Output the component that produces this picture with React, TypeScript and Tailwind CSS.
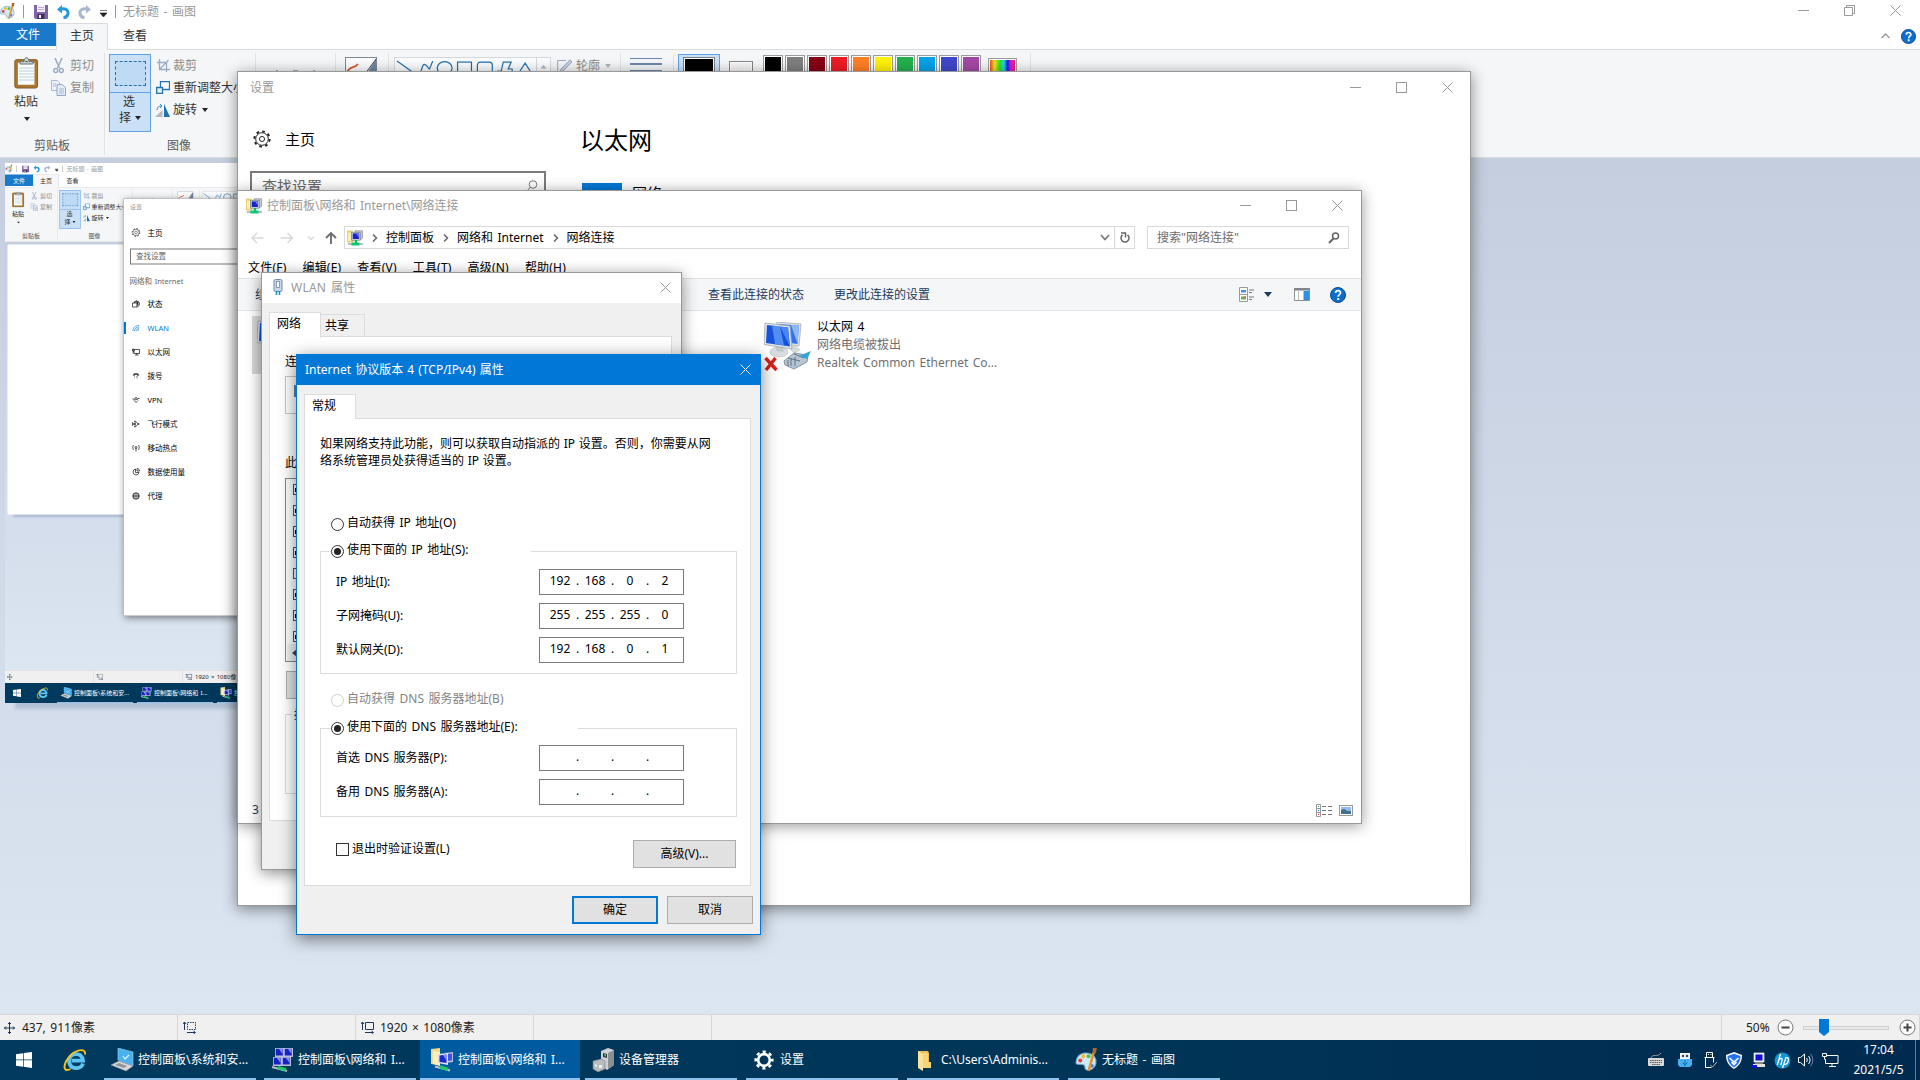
import React from 'react';

type Kids = { children?: React.ReactNode };

/* ---------- small glyphs ---------- */

const CloseGlyph = ({ color = '#999' }: { color?: string }) => (
  <svg width="11" height="11" viewBox="0 0 11 11" className="shrink-0">
    <path d="M.5 .5l10 10M10.5 .5l-10 10" stroke={color} strokeWidth="1" fill="none" />
  </svg>
);
const MinGlyph = () => (
  <svg width="11" height="11" viewBox="0 0 11 11" className="shrink-0">
    <path d="M0 5.500h11" stroke="#999" />
  </svg>
);
const MaxGlyph = () => (
  <svg width="11" height="11" viewBox="0 0 11 11" className="shrink-0">
    <rect x=".5" y=".5" width="10" height="10" stroke="#999" fill="none" />
  </svg>
);
const RestoreGlyph = () => (
  <svg width="11" height="11" viewBox="0 0 11 11" className="shrink-0">
    <path d="M.5 2.500h8v8h-8zM2.500 2.500v-2h8v8h-2" stroke="#999" fill="none" />
  </svg>
);
const Caret = ({ color = '#222', className = '' }: { color?: string; className?: string }) => (
  <svg width="6" height="4" viewBox="0 0 6 4" className={'shrink-0 ' + className}>
    <path d="M0 0h6L3 4z" fill={color} />
  </svg>
);
const HelpGlyph = ({ size = 16 }: { size?: number }) => (
  <svg width={size} height={size} viewBox="0 0 16 16" className="shrink-0">
    <circle cx="8" cy="8" r="7.500" fill="#0a6fd0" stroke="#0b4a86" />
    <path d="M5.600 6c.1-3 4.900-3 4.900-.2C10.500 7.700 8.200 7.600 8.200 9.800" stroke="#fff" strokeWidth="1.800" fill="none" />
    <rect x="7.200" y="11" width="2" height="2" fill="#fff" />
  </svg>
);

const PaletteIcon = ({ size = 16 }: { size?: number }) => (
  <svg width={size} height={size} viewBox="0 0 24 24" className="shrink-0">
    <path d="M2 13C3 6 9 4 14 5s8 5 7 10-6 7-9 6 0-4-3-5-8 1-7-3z" fill="#cfe9f8" stroke="#6fa9cc" />
    <circle cx="6" cy="12" r="2" fill="#e3443b" />
    <circle cx="9" cy="8" r="2" fill="#f3c02b" />
    <circle cx="14" cy="8" r="1.900" fill="#5fb946" />
    <circle cx="17" cy="17" r="2" fill="#3c8fdc" />
    <path d="M19 4l-5 18" stroke="#e8902c" strokeWidth="2.400" />
    <path d="M18 0h4l-1 5h-3z" fill="#a8692e" />
  </svg>
);
const SaveIcon = () => (
  <svg width="14" height="14" viewBox="0 0 14 14" className="shrink-0">
    <path d="M0 0h14v14H1.500L0 12.500z" fill="#8264ab" />
    <rect x="3" y="0" width="8" height="7" fill="#f4f2f8" />
    <path d="M4 2.500h6M4 4.500h6" stroke="#b9aed0" />
    <rect x="3.500" y="9" width="7" height="5" fill="#3f3158" />
    <rect x="5" y="10" width="2" height="3" fill="#fff" />
  </svg>
);
const UndoIcon = ({ flip = false }: { flip?: boolean }) => (
  <svg width="13" height="14" viewBox="0 0 13 14" className={flip ? 'shrink-0 -scale-x-100' : 'shrink-0'}>
    <path d="M2.500 4.500C8 2.500 11.500 5 11 8.500 10.700 11 9 12.500 6.500 13" stroke={flip ? '#a9b8cf' : '#2a97dd'} strokeWidth="3" fill="none" />
    <path d="M0 4.500L5 0v8.500z" fill={flip ? '#a9b8cf' : '#2a97dd'} />
  </svg>
);
const ClipboardIcon = () => (
  <svg width="25" height="32" viewBox="0 0 25 32" className="shrink-0">
    <rect x="2.200" y="4" width="20" height="25.500" rx="1" fill="#fbfdfe" stroke="#a9762f" strokeWidth="3.400" />
    <rect x=".8" y="2.600" width="22.800" height="28.400" rx="2" fill="none" stroke="#7d5526" strokeWidth=".7" />
    <path d="M5 11h15M5 14h15M5 17h15M5 20h15M5 23h15" stroke="#b9cfdf" />
    <path d="M6 7V4.500h4c0-5 5-5 5 0h4V7z" fill="#c9ced2" stroke="#6c7276" />
    <path d="M11.500 4.500h2" stroke="#444" />
  </svg>
);
const ScissorsIcon = () => (
  <svg width="11" height="16" viewBox="0 0 11 16" className="shrink-0">
    <path d="M2 0l4.500 10M9 0L4.500 10" stroke="#9babc7" strokeWidth="1.500" fill="none" />
    <circle cx="2.700" cy="12.500" r="2" stroke="#9babc7" strokeWidth="1.400" fill="none" />
    <circle cx="8.300" cy="12.500" r="2" stroke="#9babc7" strokeWidth="1.400" fill="none" />
  </svg>
);
const CopyIcon = () => (
  <svg width="15" height="16" viewBox="0 0 15 16" className="shrink-0">
    <path d="M.5 .5h6l2 2v8h-8z" fill="#eef2f8" stroke="#a9b8d3" />
    <path d="M6 4.500h5l3.500 3v8H6z" fill="#e5ecf7" stroke="#93a7c9" />
    <path d="M8 9h5M8 11h5M8 13h5M2 4h3M2 6h3" stroke="#a9b8d3" />
  </svg>
);

const NetFolderIcon = ({ size = 16 }: { size?: number }) => (
  <svg width={size} height={size} viewBox="0 0 16 16" className="shrink-0">
    <path d="M0 1h5l1 1v10H0z" fill="#f3dc7d" stroke="#d0b24a" strokeWidth=".6" />
    <path d="M1 3h4v8H1z" fill="#fbf0b0" />
    <path d="M8 .8h7.600v7.500L13 10V2.500H8z" fill="#c2c6d0" stroke="#8c8f99" strokeWidth=".7" />
    <rect x="4.600" y="2.300" width="8.400" height="7.900" fill="#d8dbe3" stroke="#7f8390" strokeWidth=".8" />
    <rect x="5.700" y="3.400" width="6.200" height="5.600" fill="#1725cf" />
    <path d="M9.500 4h2v3z" fill="#8ba2ff" />
    <path d="M9 10v3" stroke="#10b764" strokeWidth="2.400" />
    <path d="M1 14h15" stroke="#b7bcc0" strokeWidth="2" />
    <rect x="4.500" y="12.500" width="8" height="3" fill="#0fc873" />
  </svg>
);

const GearGlyph = ({ size, color, width }: { size: number; color: string; width: number }) => (
  <svg width={size} height={size} viewBox="0 0 24 24" className="shrink-0" fill="none" stroke={color}>
    <circle cx="12" cy="12" r="8.400" strokeWidth={width} />
    <circle cx="12" cy="12" r="10.200" strokeWidth="2.600" strokeDasharray="3.600 4.410" />
    <circle cx="12" cy="12" r="3.400" strokeWidth={width} />
  </svg>
);
const TaskGear = () => (
  <svg width="20" height="20" viewBox="0 0 24 24" className="shrink-0" fill="none" stroke="#fff">
    <circle cx="12" cy="12" r="7" strokeWidth="3.200" />
    <circle cx="12" cy="12" r="10" strokeWidth="3" strokeDasharray="3.850 4" strokeDashoffset="1.900" />
  </svg>
);

/* ---------- Paint ribbon ---------- */

const GroupLabel = ({ children }: Kids) => (
  <div className="mt-auto mb-[3px] h-4 text-center leading-4 text-[#5a5a5a]">{children}</div>
);
const Sep = () => <div className="mt-[3px] h-[102px] w-px shrink-0 bg-[#e2e3e4]" />;

const swatches = [
  'bg-black', 'bg-[#7f7f7f]', 'bg-[#880015]', 'bg-[#ed1c24]', 'bg-[#ff7f27]',
  'bg-[#fff200]', 'bg-[#22b14c]', 'bg-[#00a2e8]', 'bg-[#3f48cc]', 'bg-[#a349a4]',
];

const Ribbon = () => (
  <div className="flex h-[109px] shrink-0 border-y border-[#dadbdc] bg-[#f4f6f7]">
    <div className="flex w-[104px] flex-col">
      <div className="flex h-[86px]">
        <div className="ml-[13px] flex w-[26px] flex-col items-center pt-[7px]">
          <ClipboardIcon />
          <span className="mt-[5px] h-4 leading-4">粘贴</span>
          <Caret className="mt-[7px] ml-[2px]" />
        </div>
        <div className="ml-[12px] flex flex-col gap-[6px] pt-[8px] text-[#8d8d8d]">
          <div className="flex h-4 items-center"><span className="mr-[5px] ml-[2px] flex w-[12px]"><ScissorsIcon /></span>剪切</div>
          <div className="flex h-4 items-center"><span className="mr-[4px] flex w-[15px]"><CopyIcon /></span>复制</div>
        </div>
      </div>
      <GroupLabel>剪贴板</GroupLabel>
    </div>
    <Sep />
    <div className="flex w-[150px] flex-col">
      <div className="flex h-[83px]">
        <div className="mt-[4px] ml-[4px] flex h-[78px] w-[42px] shrink-0 flex-col items-center border border-[#62a2e4] bg-[#c9e0f7]">
          <div className="flex h-[38px] w-full items-center justify-center border-b border-[#62a2e4]">
            <div className="h-[25px] w-[31px] border border-dashed border-[#1f6fb5] bg-[#bfdaf4]" />
          </div>
          <span className="mt-px mr-[2px] h-4 leading-4">选</span>
          <span className="flex h-4 items-center leading-4">择<Caret className="ml-[4px]" /></span>
        </div>
        <div className="ml-[5px] flex flex-col gap-[6px] pt-[8px]">
          <div className="flex h-4 items-center text-[#8d8d8d]">
            <svg width="14" height="14" viewBox="0 0 14 14" className="mr-[3px] shrink-0"><path d="M3.500 0v10.500H14M1 3.500h9.500V13M12.500 1L4 10" stroke="#9babc7" strokeWidth="1.300" fill="none" /></svg>
            裁剪
          </div>
          <div className="flex h-4 items-center">
            <svg width="14" height="14" viewBox="0 0 14 14" className="mr-[3px] shrink-0"><path d="M4.500 .5h9v8h-9z" fill="#fff" stroke="#2372b4" strokeWidth="1.300" /><path d="M.7 6.500h5.800v5.800H.7z" fill="#e9f3fb" stroke="#2372b4" strokeWidth="1.300" /></svg>
            重新调整大小
          </div>
          <div className="flex h-4 items-center">
            <svg width="15" height="13" viewBox="0 0 15 13" className="mr-[3px] -ml-px shrink-0"><path d="M0 13L7.500 6v7z" fill="#b5b9bd" /><path d="M9 0l6 13H9z" fill="#1f70b5" /><path d="M2 6c0-3 2-4 4-4M5 0l2 2-2 2" stroke="#2b93dd" fill="none" /></svg>
            旋转<Caret className="ml-[5px]" />
          </div>
        </div>
      </div>
      <div className="mt-auto mb-[3px] pl-[62px] leading-4 text-[#5a5a5a]">图像</div>
    </div>
    <Sep />
    <div className="flex w-[79px] gap-[15px] pt-[20px] pl-[20px]">
      <i className="h-[2px] w-[2px] bg-[#9babc7]" /><i className="h-[2px] w-[5px] bg-[#9babc7]" /><i className="h-[2px] w-[2px] bg-[#9babc7]" />
    </div>
    <Sep />
    <div className="w-[52px] pt-[7px] pl-[9px]">
      <svg width="32" height="32" viewBox="0 0 32 32">
        <rect x=".5" y=".5" width="31" height="31" fill="#fbfcfd" stroke="#7f8890" />
        <path d="M2 15c4-7 7-3 11-8" stroke="#dd5b33" strokeWidth="2" fill="none" />
        <path d="M21 18L31 2v16z" fill="#6f86a3" /><path d="M20 17L31 2" stroke="#444" />
      </svg>
    </div>
    <Sep />
    <div className="flex w-[231px] pt-[7px] pl-[5px]">
      <div className="flex h-[60px] w-[157px] border border-[#d5d8dc] bg-[#fbfcfd]">
        <svg width="142" height="30" viewBox="0 0 142 30" className="shrink-0 border-r border-[#d5d8dc]" fill="none" stroke="#1f6faf" strokeWidth="1.200">
          <path d="M2 3l17 12M22 15c6 4 4-12 9-8s2 8 7-4" />
          <ellipse cx="50" cy="10" rx="7.500" ry="6.500" />
          <rect x="63" y="4" width="14" height="13" />
          <rect x="83" y="4" width="15" height="13" rx="3" />
          <path d="M103 13h4l2-9h8l-3 7h4v5M124 16l7-11 7 11z" />
        </svg>
        <svg width="13" height="20" viewBox="0 0 13 20"><path d="M3.500 10.500h6l-3-3.500z" fill="#aab3c2" /></svg>
      </div>
      <div className="mt-px ml-[6px] flex h-4 items-center text-[#8d8d8d]">
        <svg width="15" height="15" viewBox="0 0 15 15" className="mr-[4px]"><path d="M9 1.500H.7V14h8" stroke="#9babc7" fill="none" /><path d="M13 .8L4 10l-1 3 3-1L15 3z" fill="#c3cee0" stroke="#9babc7" /></svg>
        轮廓<Caret color="#b5b5b5" className="ml-[5px]" />
      </div>
    </div>
    <Sep />
    <div className="flex w-[52px] flex-col pt-[8px] pl-[9px]">
      <i className="h-px w-[32px] bg-[#6f86ab]" /><i className="mt-[4px] h-[2px] w-[32px] bg-[#6f86ab]" /><i className="mt-[5px] h-[3px] w-[32px] bg-[#6f86ab]" />
    </div>
    <Sep />
    <div className="flex w-[356px] pl-[4px]">
      <div className="mt-[4px] flex h-[78px] w-[42px] justify-center border border-[#62a2e4] bg-[#c9e0f7] pt-[2px]">
        <div className="h-[32px] w-[32px] border border-[#7a7f86] bg-white p-px"><div className="h-full w-full bg-black" /></div>
      </div>
      <div className="mt-[11px] ml-[9px] h-[24px] w-[24px] border border-[#868686] bg-white p-px"><div className="h-full w-full bg-[#f4f4f4]" /></div>
      <div className="mt-[5px] ml-[10px] flex gap-[2px]">
        {swatches.map((c) => (
          <div key={c} className="h-[20px] w-[20px] border border-[#9c9c9c] bg-white p-px"><div className={'h-full w-full ' + c} /></div>
        ))}
      </div>
      <div className="mt-[8px] ml-[7px] h-[28px] w-[29px] border border-[#9c9c9c] bg-white p-px">
        <div className="h-full w-full bg-[linear-gradient(90deg,#e84c1e,#f5e020_18%,#29e01e_40%,#18d9e8_56%,#1c1cf0_70%,#e31ce0_85%,#f01c50)]" />
      </div>
    </div>
    <Sep />
  </div>
);

/* ---------- taskbar ---------- */

const ControlPanelIcon = () => (
  <svg width="23" height="24" viewBox="0 0 23 24">
    <path d="M7 0l15 4v14L7 12z" fill="#49b1ee" stroke="#9fd3f3" strokeWidth=".6" />
    <path d="M12 8l2 3 4-4" stroke="#dff3ff" strokeWidth="1.200" fill="none" />
    <path d="M0 17l8-4 14 5-7 5z" fill="#d6d9dc" stroke="#8e949a" strokeWidth=".6" />
    <path d="M4 17l4-2 8 3-3 2z" fill="#8d959c" />
  </svg>
);
const ScreensIcon = () => (
  <svg width="24" height="24" viewBox="0 0 24 24">
    {[[5, 0], [14, 0], [3, 9], [12, 9]].map(([x, y]) => (
      <g key={`${x}-${y}`}>
        <path d={`M${x} ${y}h9v9h-9z`} fill="#b9bdd6" />
        <path d={`M${x + .8} ${y + .8}h7v6.700h-7z`} fill="#1822c4" />
        <path d={`M${x + 4} ${y + 1}h3.500v5z`} fill="#7f95f4" />
      </g>
    ))}
    <path d="M2 19l15 4" stroke="#b6bdc1" strokeWidth="2" />
    <path d="M8 19.500l8 2.300" stroke="#22c86a" strokeWidth="3" />
  </svg>
);
const FolderNetIcon = () => (
  <svg width="24" height="24" viewBox="0 0 24 24">
    <path d="M1 1l9-1v17l-9-1z" fill="#f3d98a" /><path d="M3 3l7 1v14l-7-2z" fill="#fdf0bd" />
    <path d="M15 5l8-1v10l-8 1z" fill="#b9bdd6" /><path d="M8 6l10-1v12l-10-2z" fill="#dfe2ea" /><path d="M9.500 7.500l7-1v8.500l-7-1z" fill="#1a28cc" />
    <path d="M13 7l3.500-.5v6z" fill="#8095f5" /><path d="M18 6l4-.6v7l-4 .4z" fill="#3c55dd" />
    <path d="M5 18.500l15 4" stroke="#bfc5c8" strokeWidth="2" /><path d="M10 19l8 2.300" stroke="#22c86a" strokeWidth="3.400" />
  </svg>
);
const DeviceIcon = () => (
  <svg width="23" height="24" viewBox="0 0 23 24">
    <path d="M9 3l7-3 6 2v15l-7 5-6-4z" fill="#cfd2d4" /><path d="M16 5l6-3v15l-6 4z" fill="#8b9094" />
    <path d="M11 5l4 1v4l-4-1z" fill="#2c3438" /><rect x="12.500" y="6" width="1.500" height="2.500" fill="#3be04f" />
    <path d="M1 13l8-2 4 2v8l-7 3-5-3z" fill="#b9bdc0" stroke="#777" strokeWidth=".6" /><path d="M3 16l2 1v2l-2-1zM7 17h3v3H7z" fill="#eceeef" />
  </svg>
);
const FolderIcon = () => (
  <svg width="16" height="21" viewBox="0 0 16 21">
    <path d="M1 1h10l1 2v9h2v6H1z" fill="#e9bd55" /><path d="M1 1l5 3v17l-5-3z" fill="#fbe39b" /><path d="M6 3h5v9h3v6H6z" fill="#f6d578" />
  </svg>
);
const IEIcon = () => (
  <svg width="24" height="24" viewBox="0 0 24 24" className="shrink-0">
    <path d="M20 15.500C18 22 7 22 6 13.500 5.500 5 19 2.500 20 12.700H8.500" stroke="#5cc6f4" strokeWidth="3.800" fill="none" />
    <path d="M22 6.500C23.500-1 11 1.500 4.500 11-.5 18.500 1 24.500 7.500 21" stroke="#f2c41d" strokeWidth="1.900" fill="none" />
  </svg>
);

const tasks = [
  { icon: <ControlPanelIcon />, text: '控制面板\\系统和安...' },
  { icon: <ScreensIcon />, text: '控制面板\\网络和 I...' },
  { icon: <FolderNetIcon />, text: '控制面板\\网络和 I...' },
  { icon: <DeviceIcon />, text: '设备管理器' },
  { icon: <TaskGear />, text: '设置' },
  { icon: <FolderIcon />, text: 'C:\\Users\\Adminis...' },
  { icon: <PaletteIcon size={25} />, text: '无标题 - 画图' },
];

const TrayIcons = () => (
  <div className="ml-auto flex items-center">
    <svg width="17" height="16" viewBox="0 0 17 16" className="mr-[13px]"><rect x="0" y="6" width="16" height="8" rx="1" fill="#dadada" /><path d="M2 8.500h12M2 10.500h12M4 12.500h8" stroke="#555" strokeDasharray="1.500 .7" /><path d="M3 6C5 1 9 6 13 1" stroke="#999" fill="none" /></svg>
    <svg width="14" height="17" viewBox="0 0 14 17" className="mr-[12px]"><rect x="2.500" y="1.500" width="9" height="5" fill="#d9edf9" stroke="#fff" /><path d="M4 4h2M8 4h2" stroke="#444" strokeWidth="2" /><path d="M0 7h14v6l-2 2H2l-2-2z" fill="#46b0ee" /><path d="M7 8v6M4.500 10.500l2.500 2.500 2.500-2.500" stroke="#126aa8" fill="none" /></svg>
    <svg width="14" height="17" viewBox="0 0 14 17" className="mr-[8px]" fill="none" stroke="#fff"><path d="M2.500 5V.5h6V5M.5 5.500h10M1.500 5.500v10h6M9.500 5.500v5" /><path d="M4 2.500h1M6.500 2.500h1" /><path d="M6.500 13l2 2 4.500-5" stroke="#bbb" /></svg>
    <svg width="16" height="17" viewBox="0 0 16 17" className="mr-[9px]"><path d="M0 3l8-3 8 3c0 7-3 11-8 14C3 14 0 10 0 3z" fill="#fff" /><path d="M1.500 4L8 1.700 14.500 4c0 5.500-2.500 9-6.500 11.500C4 13 1.500 9.500 1.500 4z" fill="#2474e8" /><path d="M3.500 6L8 10l4.500-4M5.500 10L8 12.500 10.500 10" stroke="#fff" strokeWidth="1.600" fill="none" /></svg>
    <svg width="15" height="17" viewBox="0 0 15 17" className="mr-[8px]"><rect x="3" y="1" width="10" height="9" fill="#e9e6df" stroke="#fff" strokeWidth=".6" /><rect x="4.500" y="2.500" width="7" height="6" fill="#1010d8" /><path d="M4 10h8v2H4z" fill="#888" /><path d="M2 12h12v3H2z" fill="#e4e2dc" /><path d="M0 13h6v3H0z" fill="#1010d8" /></svg>
    <svg width="17" height="17" viewBox="0 0 17 17" className="mr-[7px]"><circle cx="8.500" cy="8.500" r="8" fill="#1595d3" /><path d="M6.500 2L3.300 13M5 7.500c2.500-2 3.500-1 3 .8L6.800 13M12 5.500L8.500 16M11 6c3.500-1 4 .5 3 3.500s-2 3-4 2.700" stroke="#fff" strokeWidth="1.300" fill="none" /></svg>
    <svg width="16" height="16" viewBox="0 0 16 16" className="mr-[8px]" fill="none" stroke="#fff"><path d="M.5 5.500h2L6.500 2v12l-4-3.500h-2z" /><path d="M8.500 6c1 1.500 1 2.500 0 4M10.500 4c2 2.500 2 5.500 0 8" /><path d="M12.500 2c3 3.500 3 8.500 0 12" stroke="#7a8aa0" /></svg>
    <svg width="17" height="16" viewBox="0 0 17 16" className="mr-[14px]" fill="none" stroke="#fff"><path d="M5 3.500h11v8H3.500V7M7 14.500h7M10 11.500v3" /><path d="M.5 1.500h4v3h-4zM2.500 4.500v3" /></svg>
    <div className="flex w-[51px] flex-col items-center text-[12px] leading-5"><span>17:04</span><span>2021/5/5</span></div>
    <div className="ml-[11px] h-10 w-px bg-[#60788f]" />
    <div className="w-[4px]" />
  </div>
);

const Taskbar = ({ active }: { active: number }) => (
  <div className="flex h-10 shrink-0 items-center bg-[linear-gradient(90deg,#003a5e,#003557_60%,#002a4f)] text-white">
    <svg width="16" height="16" viewBox="0 0 16 16" className="ml-[16px] shrink-0"><path d="M0 2.200L7 1.200V7.600H0zM7.700 1.100L16 0v7.600H7.700zM0 8.300h7v6.400l-7-1zM7.700 8.300H16V16l-8.300-1.200z" fill="#fff" /></svg>
    <div className="mr-[13px] ml-[31px] flex"><IEIcon /></div>
    <div className="flex">
      {tasks.map((t, i) => (
        <div key={i} className={'flex h-10 flex-col ' + (i === active ? 'w-[160px] bg-[#005a9e]' : i >= 3 ? 'ml-px w-[160px] px-[4px]' : 'w-[160px] px-[4px]')}>
          <div className={'flex h-[38px] items-center pt-[2px] ' + (i === active ? 'pl-[10px]' : 'pl-[6px]')}>
            <span className="flex w-[24px] shrink-0 justify-center">{t.icon}</span>
            <span className="ml-[4px]">{t.text}</span>
          </div>
          <div className="h-[2px] bg-[#8fc3ee]" />
        </div>
      ))}
    </div>
    <TrayIcons />
  </div>
);

/* ---------- Paint window shell ---------- */

const SizeGlyph = ({ dashed = false }: { dashed?: boolean }) => (
  <svg width="14" height="13" viewBox="0 0 14 13" className="shrink-0" fill="none" stroke="#1e395b">
    <path d="M4.500 1.500h8v7h-8z" strokeDasharray={dashed ? '1.500 1' : undefined} />
    <path d="M1.500 9V1M0 3l1.500-2L3 3M4 11.500h8M10.500 10l2 1.500-2 1.500" />
  </svg>
);
const ZoomButton = ({ plus = false }: { plus?: boolean }) => (
  <svg width="17" height="17" viewBox="0 0 17 17" className="shrink-0">
    <circle cx="8.500" cy="8.500" r="7.500" fill="#fbfbfb" stroke="#777" />
    <path d={plus ? 'M4.500 8.500h8M8.500 4.500v8' : 'M4.500 8.500h8'} stroke="#444" strokeWidth="2" />
  </svg>
);

const PaintShell = ({ children, active, cursor }: Kids & { active: number; cursor: string }) => (
  <div className="flex h-[1080px] w-[1920px] flex-col overflow-hidden bg-white text-[#333]">
    <div className="flex h-[23px] shrink-0 items-center">
      <span className="-ml-px flex w-[24px]"><PaletteIcon size={17} /></span>
      <i className="h-[13px] w-px bg-[#999]" />
      <span className="ml-[10px] flex"><SaveIcon /></span>
      <span className="ml-[9px] flex"><UndoIcon /></span>
      <span className="ml-[8px] flex"><UndoIcon flip /></span>
      <svg width="7" height="7" viewBox="0 0 7 7" className="mt-[3px] ml-[9px]"><path d="M0 .5h7M0 3h7L3.500 7z" stroke="#222" strokeWidth=".6" fill="#222" /></svg>
      <i className="ml-[8px] h-[13px] w-px bg-[#999]" />
      <span className="ml-[7px] text-[#999]">无标题 - 画图</span>
      <div className="mr-[19px] mb-[2px] ml-auto flex gap-[35px]"><MinGlyph /><RestoreGlyph /><CloseGlyph /></div>
    </div>
    <div className="flex h-[26px] shrink-0">
      <div className="h-[23px] w-[56px] bg-[#1979ca] text-center leading-[23px] text-white">文件</div>
      <div className="z-10 -mb-px h-[27px] w-[52px] border border-b-0 border-[#dadbdc] bg-[#f4f6f7] text-center leading-[24px]">主页</div>
      <div className="ml-[15px] leading-[25px]">查看</div>
      <div className="mr-[4px] ml-auto flex items-center gap-[11px]">
        <svg width="9" height="6" viewBox="0 0 9 6"><path d="M.5 5l4-4 4 4" stroke="#999" strokeWidth="1.400" fill="none" /></svg>
        <HelpGlyph size={15} />
      </div>
    </div>
    <Ribbon />
    <div className="flex-1 overflow-hidden bg-[linear-gradient(#c4cedf,#dce6f2)] pt-[5px] pl-[5px]">
      <div className="h-[540px] w-[960px] bg-white shadow-[9px_7px_3px_-1px_rgba(120,140,175,0.35)]">{children}</div>
    </div>
    <div className="flex h-[26px] shrink-0 items-center border-t border-[#d7d7d7] bg-[#f0f0f0] text-[#222]">
      <div className="flex h-full w-[178px] items-center border-r border-[#d7d7d7] pl-[4px]">
        <svg width="11" height="12" viewBox="0 0 11 12" className="mr-[7px]" fill="none" stroke="#1e395b"><path d="M5.500 0v12M0 6h11M4 2l1.500-1.500L7 2M4 10l1.500 1.500L7 10M2 4.500L.5 6 2 7.500M9 4.500L10.500 6 9 7.500" /></svg>
        {cursor}
      </div>
      <div className="flex h-full w-[178px] items-center border-r border-[#d7d7d7] pl-[5px]"><SizeGlyph dashed /></div>
      <div className="flex h-full w-[178px] items-center gap-[5px] border-r border-[#d7d7d7] pl-[5px]"><SizeGlyph />1920 × 1080像素</div>
      <div className="h-full w-[178px] border-r border-[#d7d7d7]" />
      <div className="ml-auto flex h-full w-[199px] items-center border-x border-[#d7d7d7] pl-[24px]">
        50%
        <span className="ml-auto flex"><ZoomButton /></span>
        <div className="mr-[10px] ml-[9px] flex h-[18px] w-[86px] items-center">
          <div className="flex h-[4px] w-full items-center border border-[#d0d0d0] bg-[#e7eaea] pl-[15px]">
            <svg width="10" height="17" viewBox="0 0 10 17" className="shrink-0"><path d="M0 0h10v13l-5 4-5-4z" fill="#0078d7" /></svg>
          </div>
        </div>
        <span className="mr-[3px] flex"><ZoomButton plus /></span>
      </div>
    </div>
    <Taskbar active={active} />
  </div>
);

/* ---------- Settings window ---------- */

const navIcon = (d: string) => (
  <svg width="16" height="16" viewBox="0 0 16 16" fill="none" stroke="currentColor" strokeWidth="1.300"><path d={d} /></svg>
);
const navItems = [
  { t: '状态', i: navIcon('M1 6h9v8H1zM4 6c0-5 10-5 11 1 0 4-2 6-5 7M4 4h10M10 8h5M9 1c2 2 3 7 1 10') },
  { t: 'WLAN', i: navIcon('M2 14C2 7 7 3 14 3M5 14c0-5 4-8 9-8M8 14c0-3 3-5 6-5M11 14c0-1 1-2 3-2') },
  { t: '以太网', i: navIcon('M4 3h11v8H4zM6 14h7M9.500 11v3M1 2h3v4H1zM2.500 6v5') },
  { t: '拨号', i: navIcon('M2 6c1-4 11-4 12 0l-3 1V5H5v2zM5 9h1M8 9h1M11 9h1M5 12h1M8 12h1M11 12h1') },
  { t: 'VPN', i: navIcon('M1 6h3l2 3M6 5a2 2 0 104 0 2 2 0 10-4 0M10 8l2-3h3M4 9l4 4 4-4') },
  { t: '飞行模式', i: navIcon('M1 5l2 2h4L5 2h2l4 5h3l1 1-1 1h-3l-4 5H5l2-5H3l-2 2z') },
  { t: '移动热点', i: navIcon('M8 8v7M6 7a2 2 0 104 0 2 2 0 10-4 0M3 2C1 5 1 9 3 12M13 2c2 3 2 7 0 10') },
  { t: '数据使用量', i: navIcon('M7 2a6 6 0 107 7H7zM10 1c3 0 5 2 5 5h-5z') },
  { t: '代理', i: navIcon('M1.500 8a6.500 6.500 0 1013 0 6.500 6.500 0 10-13 0M1.500 8h13M8 1.500v13M5 2.500c-2 4-2 7 0 11M11 2.500c2 4 2 7 0 11') },
];

const SettingsWindow = () => (
  <div className="absolute top-[71px] left-[237px] flex h-[835px] w-[1234px] flex-col border border-[#999] bg-white text-black shadow-[0_3px_14px_rgba(0,0,0,0.45)]">
    <div className="flex h-[31px] shrink-0 items-center pr-[17px] pl-[12px] text-[#999]">
      设置
      <div className="ml-auto flex gap-[35px]"><MinGlyph /><MaxGlyph /><CloseGlyph /></div>
    </div>
    <div className="flex">
      <div className="w-[344px] shrink-0">
        <div className="mt-[24px] flex h-[24px] items-center pl-[15px] text-[15px]">
          <GearGlyph size={18} color="#222" width={1.300} />
          <span className="-mt-px ml-[14px]">主页</span>
        </div>
        <div className="mt-[20px] ml-[12px] flex h-[32px] w-[296px] items-center border-2 border-[#7a7a7a] pr-[6px] pl-[10px] text-[15px] text-[#666]">
          <span className="-mt-[3px]">查找设置</span>
          <svg width="12" height="12" viewBox="0 0 12 12" className="-mt-[2px] ml-auto" fill="none" stroke="#777"><circle cx="7" cy="4.500" r="3.800" /><path d="M4.300 7.300L.5 11.500" /></svg>
        </div>
        <div className="mt-[20px] pl-[11px] text-[15px] leading-6 text-[#666]">网络和 Internet</div>
        <div className="mt-[11px] text-[15px]">
          {navItems.map((n, i) => (
            <div key={n.t} className={'flex h-12 items-center ' + (i === 1 ? 'text-[#0078d7]' : '')}>
              <i className={'h-6 w-[4px] ' + (i === 1 ? 'bg-[#0078d7]' : '')} />
              <span className="mr-[15px] ml-[12px] flex">{n.i}</span>
              {n.t}
            </div>
          ))}
        </div>
      </div>
      <div>
        <div className="mt-[19px] -ml-[2px] text-[24px] leading-[36px]">以太网</div>
        <div className="mt-[25px] flex">
          <div className="flex h-[40px] w-[40px] items-start bg-[#0078d7] px-[4px] pt-[7px]"><i className="h-[20px] w-full border border-white" /></div>
          <span className="ml-[10px] text-[15px] leading-5">网络</span>
        </div>
      </div>
    </div>
  </div>
);

/* ---------- Network connections ---------- */

const Chevron = () => (
  <svg width="6" height="8" viewBox="0 0 6 8" className="shrink-0"><path d="M1 .5L4.500 4 1 7.500" stroke="#666" strokeWidth="1.500" fill="none" /></svg>
);

const LanIcon = ({ unplugged = false }: { unplugged?: boolean }) => (
  <svg width="48" height="50" viewBox="0 0 48 50" className="shrink-0">
    <path d="M12 0l25 2-2 22-8-1z" fill="#dfe2e6" stroke="#a8acb2" strokeWidth=".8" />
    <path d="M14 2l21 1.500-1.500 18.500-7-1z" fill="#2f74ee" /><path d="M27 3l8 .6-1.500 18z" fill="#8db9fb" />
    <path d="M22 23l10 1 5 4-7 4z" fill="#d5d8db" />
    <ellipse cx="15" cy="30" rx="9" ry="5" fill="#d9dcdf" stroke="#b7babd" strokeWidth=".6" /><path d="M11 22l9 2-1 6-7-1z" fill="#c3c7cb" />
    <path d="M1 1l25 3 2 23L0 22.500z" fill="#e2e5e9" stroke="#9fa4ab" strokeWidth=".8" />
    <path d="M3 3l21 2.500 2 19L2 21z" fill="#1554dc" /><path d="M8 3.500l8 1 4 19-9-1.500z" fill="#6ba2fa" opacity=".75" /><path d="M16 4.500l8 1 2 19z" fill="#4a86f2" />
    <path d="M20 39l10-8 14 2-1 7-13 7-9-4z" fill="#b8c6d4" stroke="#6e8295" strokeWidth=".8" />
    <path d="M24 38v6M27 36v8M31 35v9M24 36l12 3M30 32l10 4" stroke="#5e7386" /><path d="M35 34l12-5-4 8z" fill="#2ea5d5" />
    {unplugged ? <path d="M1.500 36l11 12M11.500 36L2 48" stroke="#d7201d" strokeWidth="3.400" /> : null}
  </svg>
);

const crumbs = ['控制面板', '网络和 Internet', '网络连接'];
const menus = ['文件(F)', '编辑(E)', '查看(V)', '工具(T)', '高级(N)', '帮助(H)'];

const ConnectionsWindow = () => (
  <div className="absolute top-[190px] left-[237px] flex h-[634px] w-[1125px] flex-col border border-[#999] bg-white text-black shadow-[0_2px_14px_rgba(0,0,0,0.4)]">
    <div className="flex h-[30px] shrink-0 items-center pr-[18px] pl-[8px] text-[#999]">
      <NetFolderIcon />
      <span className="ml-[5px]">控制面板\网络和 Internet\网络连接</span>
      <div className="mb-[2px] ml-auto flex gap-[35px]"><MinGlyph /><MaxGlyph /><CloseGlyph /></div>
    </div>
    <div className="mt-[5px] flex h-[23px] shrink-0 items-center pl-[13px]">
      <svg width="88" height="14" viewBox="0 0 88 14" className="mr-[5px] shrink-0" fill="none" strokeWidth="1.500">
        <path d="M12.500 7H1M6 2L1 7l5 5M29.500 7h12M36.500 2l5 5-5 5" stroke="#d8d8d8" />
        <path d="M57 5.500l3 3 3-3" stroke="#d8d8d8" />
        <path d="M80 13V2M75 7l5-5 5 5" stroke="#6e6e6e" strokeWidth="1.900" />
      </svg>
      <div className="flex h-[23px] w-[791px] items-center border border-[#d9d9d9] pl-[2px]">
        <NetFolderIcon />
        {crumbs.map((c) => (
          <span key={c} className="flex items-center"><span className="mr-[8px] ml-[9px] flex"><Chevron /></span>{c}</span>
        ))}
        <svg width="10" height="7" viewBox="0 0 10 7" className="mr-[4px] ml-auto"><path d="M1 1l4 4.500L9 1" stroke="#777" strokeWidth="1.700" fill="none" /></svg>
        <div className="flex h-full w-[20px] items-center justify-center border-l border-[#d9d9d9]">
          <svg width="12" height="13" viewBox="0 0 12 13" fill="none" stroke="#666" strokeWidth="1.500"><path d="M8.500 3.800a4 4 0 11-5 0" /><path d="M2 2h4.500v4.500" /></svg>
        </div>
      </div>
      <div className="ml-[12px] flex h-[23px] w-[202px] items-center border border-[#d9d9d9] pr-[8px] pl-[9px] text-[#6d6d6d]">
        搜索"网络连接"
        <svg width="12" height="12" viewBox="0 0 12 12" className="ml-auto" fill="none" stroke="#666"><circle cx="7.500" cy="4" r="3" strokeWidth="1.500" /><path d="M5.500 6.500L1 11" strokeWidth="2" /></svg>
      </div>
    </div>
    <div className="flex h-[29px] shrink-0 items-center gap-[16px] pt-[8px] pl-[10px]">
      {menus.map((m) => <span key={m} className="tracking-[0.2px]">{m}</span>)}
    </div>
    <div className="flex h-[33px] shrink-0 items-center border-y border-[#dfe1e5] bg-[#f4f6f8] text-[#1e395b]">
      <span className="w-[453px] pl-[17px]">组织</span>
      <span className="ml-[17px]">查看此连接的状态</span>
      <span className="ml-[30px]">更改此连接的设置</span>
      <div className="mr-[15px] ml-auto flex items-center">
        <svg width="16" height="15" viewBox="0 0 16 15"><path d="M.5 .5h8v14h-8zM.5 7.500h8" fill="#fff" stroke="#999" /><path d="M2 3h5v2.500H2z" fill="#4a8ce0" /><path d="M2 9.500h5v3H2z" fill="#6bb35a" /><path d="M4.500 9.500H7V11H4.500z" fill="#d85b3f" /><path d="M10 3h5M10 5.500h3M10 10h5M10 12.500h3" stroke="#777" /></svg>
        <svg width="8" height="5" viewBox="0 0 8 5" className="mr-[22px] ml-[9px]"><path d="M0 0h8L4 5z" fill="#1e395b" /></svg>
        <svg width="16" height="13" viewBox="0 0 16 13" className="mr-[20px]"><path d="M.5 .5h15v12H.5z" fill="#fff" stroke="#8a8f96" /><path d="M0 1.500h16" stroke="#7a8089" strokeWidth="2" /><path d="M9.500 3H15v9H9.500z" fill="#2f8fe0" /><path d="M4.500 3v9" stroke="#bbb" /></svg>
        <HelpGlyph size={16} />
      </div>
    </div>
    <div className="flex flex-1 items-start">
      <div className="mt-[5px] ml-[14px] flex h-[58px] w-[420px] shrink-0 bg-[#d9d9d9] pt-[4px] pl-[5px]"><LanIcon /></div>
      <div className="mt-[11px] ml-[92px] flex">
        <LanIcon unplugged />
        <div className="ml-[4px] flex flex-col pl-px leading-[18px] text-[#707070]">
          <span className="-mt-[4px] text-black">以太网 4</span>
          <span>网络电缆被拔出</span>
          <span>Realtek Common Ethernet Co...</span>
        </div>
      </div>
    </div>
    <div className="flex h-[24px] shrink-0 items-center pr-[8px] pb-[2px] pl-[14px] text-[#1e395b]">
      3 个项目
      <svg width="16" height="13" viewBox="0 0 16 13" className="mr-[7px] ml-auto"><path d="M.5 .5h4v12h-4zM.5 4.500h4M.5 8.500h4" fill="#fff" stroke="#999" /><path d="M6 2.500h4M12 2.500h4M6 6.500h4M12 6.500h4M6 10.500h4M12 10.500h4" stroke="#777" /><path d="M2 2.500h1" stroke="#3a7" /><path d="M2 6.500h1" stroke="#27e" /><path d="M2 10.500h1" stroke="#e22" /></svg>
      <svg width="14" height="11" viewBox="0 0 14 11"><rect x=".5" y=".5" width="13" height="10" fill="#fff" stroke="#999" /><path d="M2 2h10v3H2z" fill="#8fbcf3" /><path d="M2 5l3-1 3 1.500h4V9H2z" fill="#3d7291" /></svg>
    </div>
  </div>
);

/* ---------- WLAN properties ---------- */

const WlanWindow = () => (
  <div className="absolute top-[272px] left-[261px] flex h-[598px] w-[421px] flex-col border border-[#999] bg-[#f0f0f0] text-black shadow-[0_3px_14px_rgba(0,0,0,0.45)]">
    <div className="flex h-[30px] shrink-0 items-center bg-white pr-[10px] pl-[11px] text-[#999]">
      <svg width="10" height="17" viewBox="0 0 10 17" className="-mt-[2px]"><rect x="1" y=".5" width="8" height="12" rx="1.500" fill="#c9d8e8" stroke="#6c88a5" /><rect x="3.500" y="2.500" width="3" height="6" fill="#fff" stroke="#6c88a5" strokeWidth=".8" /><path d="M3.500 12v4M6.500 12v4" stroke="#1d8fc0" strokeWidth="1.600" /></svg>
      <span className="ml-[8px] tracking-[0.25px]">WLAN 属性</span>
      <div className="mb-[2px] ml-auto flex"><CloseGlyph /></div>
    </div>
    <div className="mt-[9px] flex h-[25px] shrink-0 items-end pl-[7px]">
      <div className="z-10 -mb-px h-[26px] w-[52px] border border-b-0 border-[#dcdcdc] bg-white pl-[7px] leading-[22px]">网络</div>
      <div className="h-[23px] w-[44px] border border-b-0 border-l-0 border-[#dcdcdc] pl-[4px] leading-[22px]">共享</div>
    </div>
    <div className="-mt-px ml-[7px] flex h-[485px] w-[403px] shrink-0 flex-col border border-[#dcdcdc] bg-white px-[15px] pt-[16px]">
      <span className="h-[18px] leading-[18px]">连接时使用:</span>
      <div className="mt-[5px] flex h-[38px] shrink-0 border border-[#c8c8c8] pt-[8px] pl-[8px]"><i className="h-[12px] w-[12px] bg-[#5b86ad]" /></div>
      <span className="mt-[40px] h-[18px] leading-[18px]">此连接使用下列项目(O):</span>
      <div className="mt-[6px] flex h-[184px] shrink-0 flex-col border border-[#828790] pt-[5px]">
        {[1, 1, 1, 1, 0, 1, 1, 1].map((on, i) => (
          <div key={i} className="mb-[10px] ml-[7px] flex h-[11px] w-[11px] shrink-0 items-center border border-[#555] bg-white pl-px">
            {on ? <i className="h-[4px] w-[4px] bg-black" /> : null}
          </div>
        ))}
        <div className="mt-[-8px] ml-px flex h-[17px] shrink-0 items-center bg-[#f0f0f0] pl-[5px]">
          <svg width="5" height="8" viewBox="0 0 5 8"><path d="M5 0L0 4l5 4z" fill="#444" /></svg>
        </div>
      </div>
      <div className="mt-[9px] ml-px h-[28px] w-[110px] shrink-0 border border-[#adadad] bg-[#e1e1e1]" />
      <div className="mt-[15px] h-[80px] shrink-0 border border-[#dcdcdc]">
        <span className="ml-[6px] block w-[30px] -translate-y-[9px] bg-white pl-[2px] leading-[18px]">描述</span>
      </div>
    </div>
  </div>
);

/* ---------- IPv4 properties ---------- */

const Radio = ({ on = false, disabled = false }: { on?: boolean; disabled?: boolean }) => (
  <svg width="13" height="13" viewBox="0 0 13 13" className="mt-[2px] mr-[3px] shrink-0">
    <circle cx="6.500" cy="6.500" r="6" fill="#fff" stroke={disabled ? '#ccc' : '#333'} />
    {on ? <circle cx="6.500" cy="6.500" r="3.500" fill="#222" /> : null}
  </svg>
);
const RadioRow = ({ on, disabled, text }: { on?: boolean; disabled?: boolean; text: string }) => (
  <div className={'flex h-[18px] items-center bg-white leading-[18px] ' + (disabled ? 'text-[#838383]' : '')}>
    <Radio on={on} disabled={disabled} />
    {text}
  </div>
);
const IpField = ({ label, parts }: { label: string; parts: string[] }) => (
  <div className="flex h-[26px] items-center">
    <span className="w-[203px]">{label}</span>
    <div className="flex h-[26px] w-[145px] items-center border border-[#7a7a7a] bg-white pb-[2px] pl-[5px]">
      {parts.map((p, i) => (
        <React.Fragment key={i}>
          {i > 0 ? <span className="w-[5px] text-center">.</span> : null}
          <span className="w-[30px] text-center">{p}</span>
        </React.Fragment>
      ))}
    </div>
  </div>
);

const Ipv4Dialog = () => (
  <div className="absolute top-[354px] left-[296px] flex h-[581px] w-[465px] flex-col border border-[#0078d7] bg-[#f0f0f0] text-black shadow-[0_4px_16px_rgba(0,0,0,0.5)]">
    <div className="flex h-[30px] shrink-0 items-center bg-[#0078d7] pr-[9px] pl-[8px] text-white">
      <span className="[word-spacing:1px]">Internet 协议版本 4 (TCP/IPv4) 属性</span>
      <div className="mb-[2px] ml-auto flex"><CloseGlyph color="#fff" /></div>
    </div>
    <div className="mt-[9px] flex h-[24px] shrink-0 pl-[7px]">
      <div className="z-10 -mb-px h-[25px] w-[52px] border border-b-0 border-[#dcdcdc] bg-white pl-[7px] leading-[22px]">常规</div>
    </div>
    <div className="ml-[7px] flex h-[468px] w-[447px] shrink-0 flex-col border border-[#dcdcdc] bg-white px-[15px]">
      <p className="mt-[16px] h-[34px] leading-[17px] [word-spacing:0.6px]">
        如果网络支持此功能，则可以获取自动指派的 IP 设置。否则，你需要从网
        <br />
        络系统管理员处获得适当的 IP 设置。
      </p>
      <div className="mt-[45px] pl-[11px]"><RadioRow text="自动获得 IP 地址(O)" /></div>
      <div className="mt-[19px] h-[123px] w-[417px] border border-[#dcdcdc]">
        <div className="-mt-[11px] ml-[10px] w-[200px] bg-white"><RadioRow on text="使用下面的 IP 地址(S):" /></div>
        <div className="mt-[10px] flex flex-col gap-[8px] pl-[15px]">
          <IpField label="IP 地址(I):" parts={['192', '168', '0', '2']} />
          <IpField label="子网掩码(U):" parts={['255', '255', '255', '0']} />
          <IpField label="默认网关(D):" parts={['192', '168', '0', '1']} />
        </div>
      </div>
      <div className="mt-[16px] pl-[11px]"><RadioRow disabled text="自动获得 DNS 服务器地址(B)" /></div>
      <div className="mt-[20px] h-[89px] w-[417px] border border-[#dcdcdc]">
        <div className="-mt-[11px] ml-[10px] w-[247px] bg-white"><RadioRow on text="使用下面的 DNS 服务器地址(E):" /></div>
        <div className="mt-[9px] flex flex-col gap-[8px] pl-[15px]">
          <IpField label="首选 DNS 服务器(P):" parts={['', '', '', '']} />
          <IpField label="备用 DNS 服务器(A):" parts={['', '', '', '']} />
        </div>
      </div>
      <div className="mt-[23px] flex w-[416px] justify-between">
        <div className="ml-[16px] flex h-[18px] items-center">
          <i className="mr-[3px] h-[13px] w-[13px] border border-[#333] bg-white" />
          退出时验证设置(L)
        </div>
        <div className="h-[28px] w-[103px] border border-[#adadad] bg-[#e1e1e1] text-center leading-[26px]">高级(V)...</div>
      </div>
    </div>
    <div className="mt-[10px] flex justify-end gap-[9px] pr-[7px]">
      <div className="h-[28px] w-[86px] border-2 border-[#0078d7] bg-[#e1e1e1] text-center leading-[24px]">确定</div>
      <div className="h-[28px] w-[86px] border border-[#adadad] bg-[#e1e1e1] text-center leading-[26px]">取消</div>
    </div>
  </div>
);

export default function App() {
  return (
    <div className="relative h-[1080px] w-[1920px] overflow-hidden whitespace-nowrap text-[12px] leading-[18px] [word-spacing:1.4px] font-['Noto_Sans','Noto_Sans_CJK_SC',sans-serif]">
      <PaintShell active={2} cursor="437, 911像素">
        <div className="h-[540px] w-[960px] overflow-hidden">
          <div className="relative h-[1080px] w-[1920px] origin-top-left scale-50">
            <PaintShell active={-1} cursor="" />
            <SettingsWindow />
          </div>
        </div>
      </PaintShell>
      <SettingsWindow />
      <ConnectionsWindow />
      <WlanWindow />
      <Ipv4Dialog />
    </div>
  );
}
